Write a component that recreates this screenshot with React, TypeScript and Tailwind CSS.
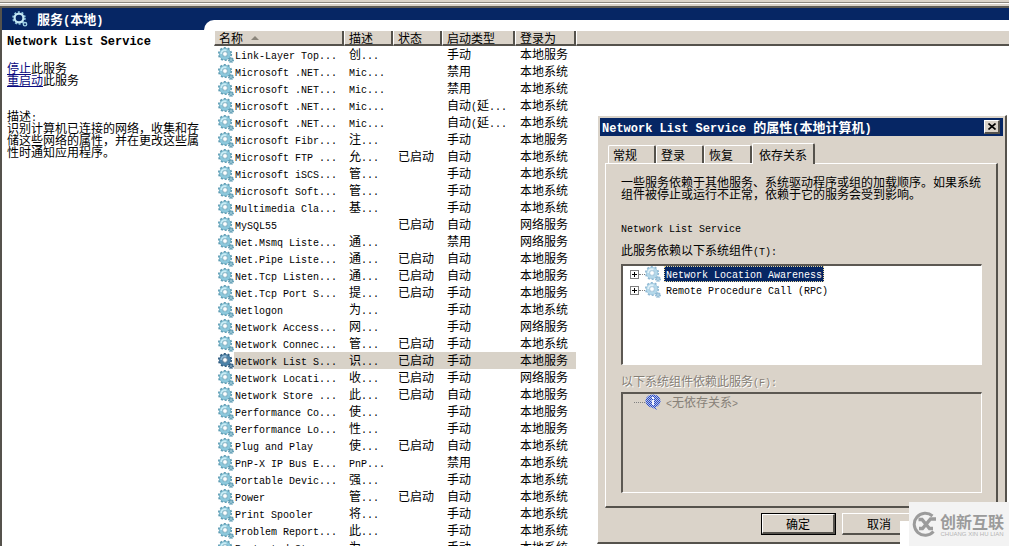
import React from "react";

type Service = {
  name: string;
  desc: string;
  started?: boolean;
  startup: string;
  logon: string;
  selected?: boolean;
};

const SYSTEM = "本地系统";
const LOCAL = "本地服务";
const NETWORK = "网络服务";

const services: Service[] = [
  { name: "Link-Layer Top...", desc: "创...", startup: "手动", logon: LOCAL },
  { name: "Microsoft .NET...", desc: "Mic...", startup: "禁用", logon: SYSTEM },
  { name: "Microsoft .NET...", desc: "Mic...", startup: "禁用", logon: SYSTEM },
  { name: "Microsoft .NET...", desc: "Mic...", startup: "自动(延...", logon: SYSTEM },
  { name: "Microsoft .NET...", desc: "Mic...", startup: "自动(延...", logon: SYSTEM },
  { name: "Microsoft Fibr...", desc: "注...", startup: "手动", logon: LOCAL },
  { name: "Microsoft FTP ...", desc: "允...", started: true, startup: "自动", logon: SYSTEM },
  { name: "Microsoft iSCS...", desc: "管...", startup: "手动", logon: SYSTEM },
  { name: "Microsoft Soft...", desc: "管...", startup: "手动", logon: SYSTEM },
  { name: "Multimedia Cla...", desc: "基...", startup: "手动", logon: SYSTEM },
  { name: "MySQL55", desc: "", started: true, startup: "自动", logon: NETWORK },
  { name: "Net.Msmq Liste...", desc: "通...", startup: "禁用", logon: NETWORK },
  { name: "Net.Pipe Liste...", desc: "通...", started: true, startup: "自动", logon: LOCAL },
  { name: "Net.Tcp Listen...", desc: "通...", started: true, startup: "自动", logon: LOCAL },
  { name: "Net.Tcp Port S...", desc: "提...", started: true, startup: "手动", logon: LOCAL },
  { name: "Netlogon", desc: "为...", startup: "手动", logon: SYSTEM },
  { name: "Network Access...", desc: "网...", startup: "手动", logon: NETWORK },
  { name: "Network Connec...", desc: "管...", started: true, startup: "手动", logon: SYSTEM },
  { name: "Network List S...", desc: "识...", started: true, startup: "手动", logon: LOCAL, selected: true },
  { name: "Network Locati...", desc: "收...", started: true, startup: "手动", logon: NETWORK },
  { name: "Network Store ...", desc: "此...", started: true, startup: "自动", logon: LOCAL },
  { name: "Performance Co...", desc: "使...", startup: "手动", logon: LOCAL },
  { name: "Performance Lo...", desc: "性...", startup: "手动", logon: LOCAL },
  { name: "Plug and Play", desc: "使...", started: true, startup: "自动", logon: SYSTEM },
  { name: "PnP-X IP Bus E...", desc: "PnP...", startup: "禁用", logon: SYSTEM },
  { name: "Portable Devic...", desc: "强...", startup: "手动", logon: SYSTEM },
  { name: "Power", desc: "管...", started: true, startup: "自动", logon: SYSTEM },
  { name: "Print Spooler", desc: "将...", startup: "手动", logon: SYSTEM },
  { name: "Problem Report...", desc: "此...", startup: "手动", logon: SYSTEM },
  { name: "Protected St...", desc: "为...", startup: "手动", logon: SYSTEM },
];

/** Sets Latin runs in a narrow monospace so that one is half as wide as a Chinese character. */
function Txt({ children, bold = false }: { children: string; bold?: boolean }) {
  const runs = children.match(/[\x20-\x7e]+|[^\x20-\x7e]+/g) ?? [];
  return (
    <>
      {runs.map((run, i) =>
        /^[\x20-\x7e]/.test(run) ? (
          <span
            key={i}
            className={
              bold
                ? "whitespace-pre font-['Liberation_Mono',monospace] text-[12px] leading-none"
                : "whitespace-pre font-['Liberation_Mono',monospace] text-[10px] leading-none"
            }
          >
            {run}
          </span>
        ) : (
          <React.Fragment key={i}>{run}</React.Fragment>
        ),
      )}
    </>
  );
}

function Gear({ tone = "normal" }: { tone?: "normal" | "selected" | "light" }) {
  const [edge, body, shine] = {
    normal: ["#5f9db4", "#8cc8dc", "#c9ecf5"],
    selected: ["#2f5c80", "#4c82a8", "#8db6d2"],
    light: ["#8fb9d4", "#b4d8ea", "#dff1f9"],
  }[tone];
  return (
    <svg viewBox="0 0 16 16" className="size-4 shrink-0" aria-hidden="true">
      <circle cx="7" cy="7" r="6.2" fill="none" stroke={edge} strokeWidth="1.8" strokeDasharray="2 1.896" />
      <circle cx="7" cy="7" r="4.3" fill="none" stroke={edge} strokeWidth="3.2" />
      <circle cx="7" cy="7" r="4.2" fill="none" stroke={body} strokeWidth="2.6" />
      <path d="M3.200 7A3.800 3.800 0 0 1 8.500 3.500" fill="none" stroke={shine} strokeWidth="1.800" />
      <circle cx="7" cy="7" r="2.4" fill="#fff" stroke={edge} strokeWidth=".7" />
      <circle cx="13" cy="13" r="2.3" fill="none" stroke={edge} strokeWidth="1.4" strokeDasharray="1.1 .706" />
      <circle cx="13" cy="13" r="1.4" fill="#dff1f7" stroke={edge} strokeWidth="1.3" />
    </svg>
  );
}

const headCell =
  "h-[15px] border-b-2 border-r-2 border-[#55524c] border-l border-l-white bg-[#dad3c9] p-0 text-left font-normal";

function ServiceTable() {
  return (
    <table className="w-full table-fixed border-separate border-spacing-0 whitespace-nowrap leading-[15px]">
      <colgroup>
        <col className="w-[130px]" />
        <col className="w-[49px]" />
        <col className="w-[49px]" />
        <col className="w-[73px]" />
        <col className="w-[61px]" />
        <col />
      </colgroup>
      <thead>
        <tr>
          <th className={`${headCell} pl-1`}>
            <span className="flex h-[13px] items-center gap-2">
              名称
              <svg viewBox="0 0 8 4" className="h-1 w-2" aria-hidden="true">
                <path d="M0 4 4 0l4 4z" fill="#8a857b" />
              </svg>
            </span>
          </th>
          {["描述", "状态", "启动类型", "登录为"].map((h) => (
            <th key={h} className={`${headCell} pl-1`}>
              <span className="flex h-[13px] items-center">{h}</span>
            </th>
          ))}
          <td className="h-[15px] border-b-2 border-l border-[#55524c] border-l-white bg-[#dad3c9] p-0" />
        </tr>
      </thead>
      <tbody className="leading-[15px]">
        {services.map((s, i) => {
          const cell = s.selected ? "bg-[#d8d2c8] p-0 pl-[5px] align-top" : "p-0 pl-[5px] align-top";
          return (
            <tr key={i}>
              <td className="p-0 pl-1 align-top">
                <div className="flex h-[17px] items-center">
                  <Gear tone={s.selected ? "selected" : "normal"} />
                  <div className={s.selected ? "h-[17px] flex-1 bg-[#d8d2c8] pl-px" : "h-[17px] flex-1 pl-px"}>
                    <Txt>{s.name}</Txt>
                  </div>
                </div>
              </td>
              <td className={cell}><div className="h-[17px]"><Txt>{s.desc}</Txt></div></td>
              <td className={cell}><div className="h-[17px]">{s.started ? "已启动" : ""}</div></td>
              <td className={cell}><div className="h-[17px]"><Txt>{s.startup}</Txt></div></td>
              <td className={cell}><div className="h-[17px]">{s.logon}</div></td>
              <td className="p-0" />
            </tr>
          );
        })}
      </tbody>
    </table>
  );
}

function Expander() {
  return (
    <>
      <button type="button" aria-label="展开" className="size-[9px] shrink-0 border border-[#808080] bg-white">
        <svg viewBox="0 0 7 7" className="size-[7px]" aria-hidden="true">
          <path d="M1 3.5h5M3.5 1v5" stroke="#000" strokeWidth="1" />
        </svg>
      </button>
      <span className="w-[6px] border-t border-dotted border-[#808080]" />
    </>
  );
}

function InfoIcon() {
  return (
    <svg viewBox="0 0 16 16" className="size-4 shrink-0" aria-hidden="true">
      <defs>
        <pattern id="checker" width="2" height="2" patternUnits="userSpaceOnUse">
          <rect width="1" height="1" fill="#2a48c4" />
          <rect x="1" y="1" width="1" height="1" fill="#2a48c4" />
        </pattern>
      </defs>
      <path d="M8 .5c4.200 0 7.500 2.900 7.500 6.500 0 3-2.300 5.500-5.500 6.300L12 16l-5-2.600C3.300 13 .5 10.300.5 7 .5 3.400 3.800.5 8 .5z" fill="#b5c3ea" />
      <path d="M8 .5c4.200 0 7.500 2.900 7.500 6.500 0 3-2.300 5.500-5.500 6.300L12 16l-5-2.600C3.300 13 .5 10.300.5 7 .5 3.400 3.800.5 8 .5z" fill="url(#checker)" />
      <path d="M7 3h2v2H7zM6.500 6H9v5H7V7h-.5z" fill="#f4f6ff" />
    </svg>
  );
}

const idleTab =
  "h-[18px] rounded-t-[2px] border-l border-t border-white border-r-2 border-r-[#55524c] pl-1 text-left";
const sunken = "border border-l-2 border-t-2 border-b-white border-r-white border-l-[#5c5852] border-t-[#5c5852]";
const raised = "border border-white border-b-2 border-r-2 border-b-[#55524c] border-r-[#55524c] bg-[#dad3c9]";

function PropertiesDialog() {
  return (
    <section
      role="dialog"
      aria-labelledby="dialog-title"
      className="absolute left-[597px] top-[115px] flex w-[410px] flex-col border border-b-2 border-r-2 border-white border-b-[#55524c] border-r-[#55524c] bg-[#dad3c9] p-[2px] pb-[7px]"
    >
      <header className="flex h-[18px] items-center justify-between bg-[#062664] pl-[2px] pr-[3px] text-white">
        <h2 id="dialog-title" className="whitespace-nowrap text-[13px] font-bold leading-4">
          <Txt bold>Network List Service 的属性(本地计算机)</Txt>
        </h2>
        <button type="button" aria-label="关闭" className={`flex h-[14px] w-4 items-center justify-center ${raised}`}>
          <svg viewBox="0 0 8 7" className="h-[7px] w-2" aria-hidden="true">
            <path d="M.5.500 7.500 6.500M7.500.500.500 6.500" stroke="#000" strokeWidth="1.6" />
          </svg>
        </button>
      </header>

      <div role="tablist" className="mt-[7px] flex items-end pl-2">
        <button type="button" role="tab" aria-selected="false" className={`w-12 ${idleTab}`}>常规</button>
        <button type="button" role="tab" aria-selected="false" className={`w-12 ${idleTab}`}>登录</button>
        <button type="button" role="tab" aria-selected="false" className={`w-12 ${idleTab}`}>恢复</button>
        <button
          type="button"
          role="tab"
          aria-selected="true"
          className="relative -mb-px h-[21px] rounded-t-[2px] border-l border-r-2 border-t border-white border-r-[#55524c] bg-[#dad3c9] px-[6px]"
        >
          依存关系
        </button>
      </div>

      <div
        role="tabpanel"
        className="mx-[5px] flex flex-col border border-b-2 border-r-2 border-white border-b-[#55524c] border-r-[#55524c] pb-[13px] pl-[15px] pr-[14px] pt-3"
      >
        <p className="leading-3">
          一些服务依赖于其他服务、系统驱动程序或组的加载顺序。如果系统组件被停止或运行不正常，依赖于它的服务会受到影响。
        </p>
        <p className="mt-[19px] h-4 leading-4"><Txt>Network List Service</Txt></p>
        <p id="depends-on" className="mt-[7px] h-4 leading-4"><Txt>此服务依赖以下系统组件(T):</Txt></p>
        <ul aria-labelledby="depends-on" className={`mt-[6px] h-[101px] bg-white pl-[7px] ${sunken}`}>
          <li className="flex h-4 items-center">
            <Expander />
            <Gear tone="light" />
            <span className="ml-[3px] h-4 border border-dotted border-[#e8d89a] bg-[#062664] px-px leading-3 text-white">
              <Txt>Network Location Awareness</Txt>
            </span>
          </li>
          <li className="flex h-4 items-center">
            <Expander />
            <Gear tone="light" />
            <span className="ml-[5px] h-4 leading-[14px]"><Txt>Remote Procedure Call (RPC)</Txt></span>
          </li>
        </ul>
        <p id="depended-by" className="mt-2 h-4 leading-4 text-[#868077] [text-shadow:1px_1px_0_#fff]">
          <Txt>以下系统组件依赖此服务(F):</Txt>
        </p>
        <ul aria-labelledby="depended-by" className={`mt-[3px] h-[101px] pl-[11px] ${sunken}`}>
          <li className="flex h-4 items-center text-[#868077]">
            <span className="w-[11px] border-t border-dotted border-[#808080]" />
            <InfoIcon />
            <span className="ml-[5px] leading-4"><Txt>{"<无依存关系>"}</Txt></span>
          </li>
        </ul>
      </div>

      <footer className="mt-[5px] flex justify-end gap-[6px] pr-[86px]">
        <button type="button" className="h-[22px] w-[75px] border border-black bg-[#dad3c9]">
          <span className={`flex h-5 items-center justify-center ${raised}`}>确定</span>
        </button>
        <button type="button" className={`h-[22px] w-[75px] ${raised}`}>取消</button>
      </footer>
    </section>
  );
}

function Watermark() {
  return (
    <div className="absolute bottom-0 right-0 flex items-end">
      <div className="h-[25px] w-[9px] bg-white" />
      <div className="flex h-11 w-[100px] items-center gap-[2px] bg-[#f3f3f3] pl-[3px] text-[#9b9b9b]">
        <svg viewBox="0 0 26 26" className="size-[26px] shrink-0" fill="none" stroke="currentColor" aria-hidden="true">
          <path d="M21.500 20.500A11 11 0 1 1 20.500 5" strokeWidth="3" />
          <path d="M6.500 8.500H10l7.500 9H21" strokeWidth="3.4" />
          <path d="M7 17.500h3.500L18.500 8H24" strokeWidth="3.4" />
        </svg>
        <div className="flex flex-col items-center whitespace-nowrap">
          <span className="text-[16px] font-bold leading-5">创新互联</span>
          <span className="font-['Liberation_Sans',sans-serif] text-[6px] leading-[7px] text-[#b4b4b4]">CHUANG XIN HU LIAN</span>
        </div>
      </div>
    </div>
  );
}

export default function App() {
  return (
    <main className="relative flex h-screen flex-col overflow-hidden bg-white font-['Noto_Sans_CJK_SC',sans-serif] text-[12px] leading-[15px] text-black">
      <div className="h-[3px] shrink-0 border-b border-[#8a867e] bg-[#dad3c9]" />
      <div className="mt-px h-1 shrink-0 border-b-2 border-[#5c5a55] bg-[#dad3c9]" />
      <div className="flex min-h-0 flex-1 border-l-2 border-[#55524c] bg-[#062664]">
        <aside className="flex w-[202px] shrink-0 flex-col">
          <header className="flex h-[22px] shrink-0 items-center gap-[9px] pl-[10px] text-white">
            <svg viewBox="0 0 16 16" className="size-4" fill="none" aria-hidden="true">
              <circle cx="7" cy="7" r="6" stroke="#8fc4dc" strokeWidth="1.600" strokeDasharray="2 1.770" />
              <circle cx="7" cy="7" r="4.400" stroke="#c6e8f3" strokeWidth="2.200" />
              <circle cx="13" cy="13.200" r="1.700" stroke="#9fd0e4" strokeWidth="1.400" />
            </svg>
            <h1 className="text-[13px] font-bold leading-[18px]"><Txt bold>服务(本地)</Txt></h1>
          </header>
          <div className="flex-1 bg-white pl-[5px] pt-[2px]">
            <h2 className="h-4 whitespace-nowrap font-bold leading-4"><Txt bold>Network List Service</Txt></h2>
            <div className="mt-[14px] leading-3">
              <p><a href="#stop" className="text-[#0a0a80] underline">停止</a>此服务</p>
              <p><a href="#restart" className="text-[#0a0a80] underline">重启动</a>此服务</p>
            </div>
            <div className="mt-6 leading-3">
              <p className="h-3"><Txt>描述:</Txt></p>
              <p className="w-48">识别计算机已连接的网络，收集和存储这些网络的属性，并在更改这些属性时通知应用程序。</p>
            </div>
          </div>
        </aside>
        <div className="mt-3 flex min-w-0 flex-1 flex-col overflow-hidden rounded-tl-[10px] bg-white pl-[10px] pt-[11px]">
          <ServiceTable />
        </div>
      </div>
      <PropertiesDialog />
      <Watermark />
    </main>
  );
}
